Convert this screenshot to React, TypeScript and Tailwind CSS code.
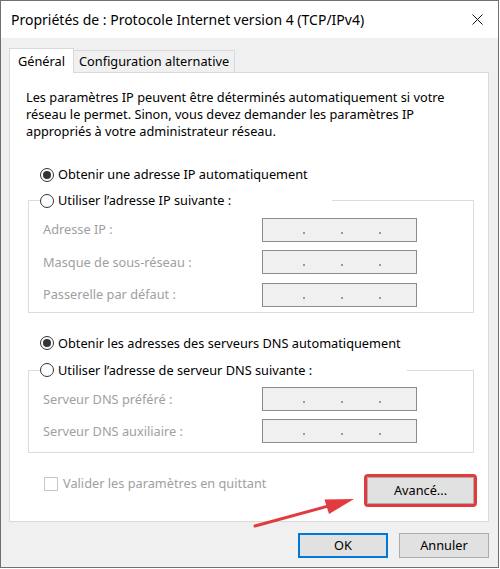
const Radio = ({ checked }: { checked?: boolean }) => (
  <span className="w-[14px] h-[14px] rounded-full border border-[#333333] bg-white flex items-center justify-center shrink-0">
    {checked && <span className="w-[8px] h-[8px] rounded-full bg-[#333333]" />}
  </span>
);

const IpBox = () => (
  <div className="w-[155px] h-[24px] border border-[#8c8c8c] bg-[#f0f0f0] flex items-center pt-[6px] pl-[40px] gap-[36px]">
    <span className="w-[2px] h-[2px] bg-[#9a9a9a]" />
    <span className="w-[2px] h-[2px] bg-[#9a9a9a]" />
    <span className="w-[2px] h-[2px] bg-[#9a9a9a]" />
  </div>
);

const Field = ({ label }: { label: string }) => (
  <>
    <span className="text-[#a0a0a0] flex items-center">{label}</span>
    <IpBox />
  </>
);

const App = () => {
  return (
    <div className="w-[499px] h-[568px] border border-[#707070] bg-[#f0f0f0] flex flex-col relative font-['Noto_Sans','Liberation_Sans',sans-serif] text-[12.75px] leading-[17px] text-black">
      {/* title bar */}
      <div className="h-[37px] bg-white flex items-center pl-[10px] shrink-0">
        <span className="text-[14px]">Propriétés de : Protocole Internet version 4 (TCP/IPv4)</span>
        <svg className="ml-auto mr-[15px]" width="11" height="11" viewBox="0 0 11 11">
          <path d="M0.5 0.5 L10.5 10.5 M10.5 0.5 L0.5 10.5" stroke="#111" strokeWidth="1" />
        </svg>
      </div>

      <div className="flex flex-col pt-[10px] pl-[8px] pr-[9px]">
        {/* tabs */}
        <div className="flex items-end">
          <div className="relative z-10 h-[25px] -mb-px w-[65px] pl-[8px] flex items-center border border-b-0 border-[#d9d9d9] bg-white">
            Général
          </div>
          <div className="h-[22px] w-[161px] pl-[5px] flex items-center border border-l-0 border-b-0 border-[#d9d9d9] bg-[#f0f0f0]">
            Configuration alternative
          </div>
        </div>

        {/* panel */}
        <div className="w-[480px] h-[450px] border border-[#d9d9d9] bg-white pt-[16px] pl-[16px] flex flex-col">
          <p>
            Les paramètres IP peuvent être déterminés automatiquement si votre
            <br />
            réseau le permet. Sinon, vous devez demander les paramètres IP
            <br />
            appropriés à votre administrateur réseau.
          </p>

          <div className="mt-[26px] ml-[14px] h-[17px] flex items-center gap-[4px]">
            <Radio checked />
            <span>Obtenir une adresse IP automatiquement</span>
          </div>

          <fieldset className="mt-[9px] ml-[2px] w-[446px] border border-[#dcdcdc] pb-[5px]">
            <legend className="ml-[11px] w-[292px] h-[17px] flex items-center gap-[4px]">
              <Radio />
              <span>Utiliser l’adresse IP suivante :</span>
            </legend>
            <div className="mt-[8.5px] pl-[14px] grid grid-cols-[219px_155px] gap-y-[8.5px]">
              <Field label="Adresse IP :" />
              <Field label="Masque de sous-réseau :" />
              <Field label="Passerelle par défaut :" />
            </div>
          </fieldset>

          <div className="mt-[22px] ml-[14px] h-[17px] flex items-center gap-[4px]">
            <Radio checked />
            <span>Obtenir les adresses des serveurs DNS automatiquement</span>
          </div>

          <fieldset className="mt-[10px] ml-[2px] w-[446px] border border-[#dcdcdc] pb-[8.5px]">
            <legend className="ml-[11px] w-[367px] h-[17px] flex items-center gap-[4px]">
              <Radio />
              <span>Utiliser l’adresse de serveur DNS suivante :</span>
            </legend>
            <div className="mt-[8.5px] pl-[14px] grid grid-cols-[219px_155px] gap-y-[8px]">
              <Field label="Serveur DNS préféré :" />
              <Field label="Serveur DNS auxiliaire :" />
            </div>
          </fieldset>

          <div className="mt-[21px] pl-[18px] pr-[11px] flex items-start justify-between">
            <div className="mt-[3px] h-[14px] flex items-center gap-[5px]">
              <span className="w-[14px] h-[14px] border border-[#c8c8c8] bg-white" />
              <span className="text-[#a0a0a0]">Valider les paramètres en quittant</span>
            </div>
            <div className="w-[113px] h-[33px] border-[3px] border-[#e23b3f] rounded-[4px]">
              <button className="w-full h-full border border-[#adadad] bg-[#e1e1e1] flex items-center justify-center">
                Avancé...
              </button>
            </div>
          </div>
        </div>

        {/* dialog buttons */}
        <div className="mt-[11px] flex justify-end gap-[11px]">
          <button className="w-[90px] h-[25px] border-2 border-[#0078d7] bg-[#e1e1e1] flex items-center justify-center">
            OK
          </button>
          <button className="w-[90px] h-[25px] border border-[#adadad] bg-[#e1e1e1] flex items-center justify-center">
            Annuler
          </button>
        </div>
      </div>

      {/* red annotation arrow */}
      <svg className="absolute left-[249px] top-[489px]" width="110" height="40" viewBox="0 0 110 40">
        <line x1="5" y1="36" x2="77" y2="16.4" stroke="#e23b3f" strokeWidth="3" strokeLinecap="round" />
        <polygon points="104,9 79,24 74.5,9.5" fill="#e23b3f" />
      </svg>
    </div>
  );
};

export default App;
